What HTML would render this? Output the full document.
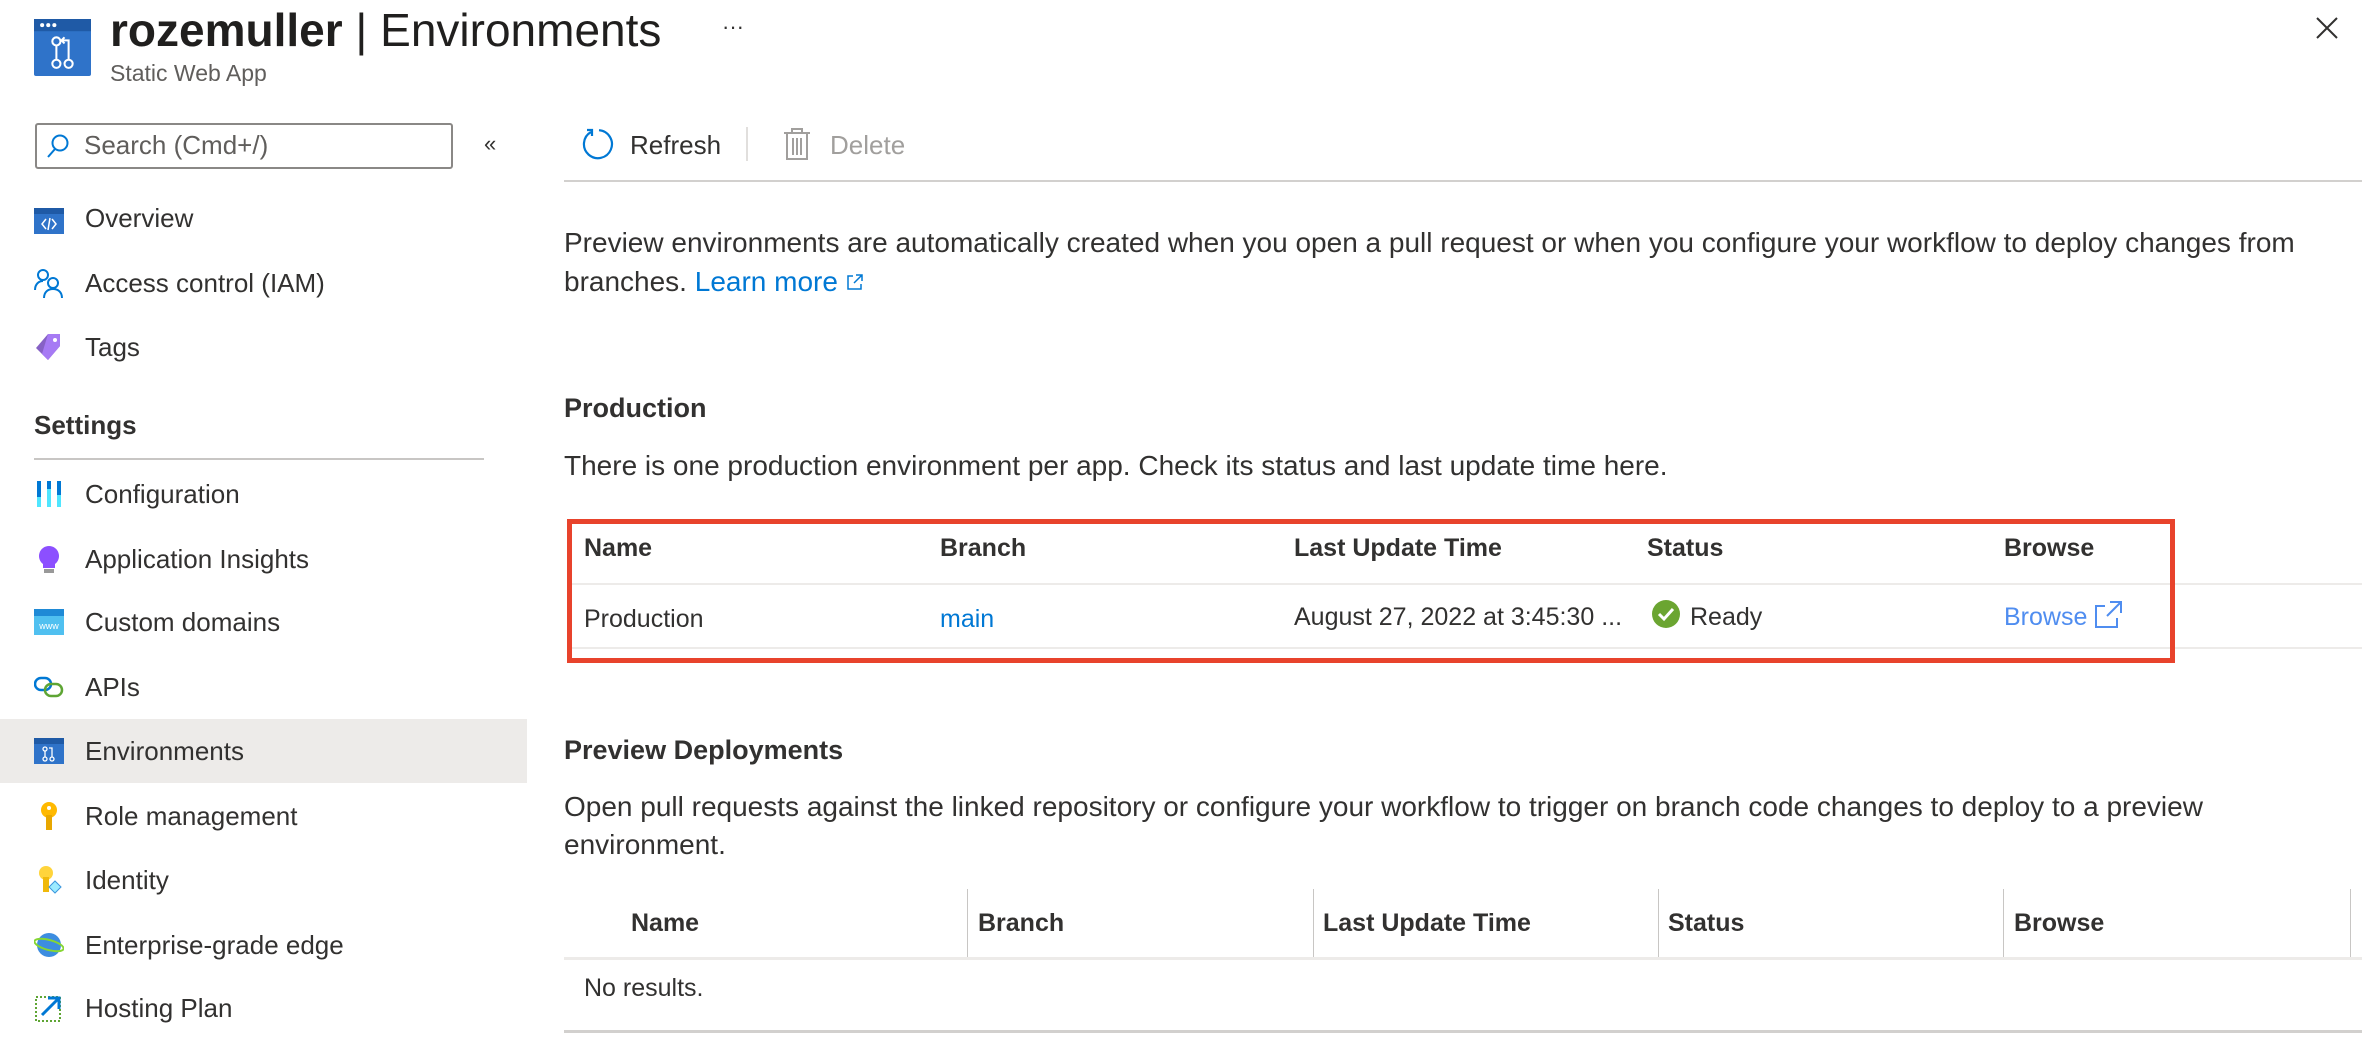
<!DOCTYPE html>
<html><head><meta charset="utf-8"><style>
*{margin:0;padding:0;box-sizing:border-box}
body{width:2362px;height:1042px;background:#fff;font-family:"Liberation Sans",sans-serif;color:#323130;position:relative;overflow:hidden}
.a{position:absolute;white-space:nowrap}
.nav{position:absolute;left:85px;font-size:26px;color:#323130;line-height:30px}
.ic{position:absolute;left:34px;width:30px;height:30px}
.t{font-size:25px;line-height:30px}
.p{font-size:28px;line-height:38px}
.h{font-size:27px;line-height:30px;font-weight:bold}
.b{font-weight:bold}
.hr{position:absolute;height:2px;background:#edebe9}
.sep{position:absolute;width:1px;background:#c8c6c4;top:889px;height:68px}
</style></head><body>
<svg class="a" style="left:34px;top:19px" width="57" height="57" viewBox="0 0 56 56"><rect width="56" height="56" rx="2" fill="#2f73c9"/><rect width="56" height="12" fill="#1f5aa6"/><circle cx="8" cy="6" r="2" fill="#fff"/><circle cx="14" cy="6" r="2" fill="#fff"/><circle cx="20" cy="6" r="2" fill="#fff"/><g fill="none" stroke="#fff" stroke-width="2"><circle cx="22" cy="22" r="4"/><circle cx="22" cy="44" r="4"/><circle cx="34" cy="44" r="4"/><path d="M22 26v14M34 40V21h-6M30 18l-3 3 3 3"/></g></svg>
<div class="a" style="left:110px;top:4px;font-size:46px;line-height:52px;color:#201f1e"><span class="b">rozemuller</span> | Environments</div>
<div class="a" style="left:110px;top:60px;font-size:23px;color:#605e5c">Static Web App</div>
<div class="a" style="left:722px;top:14px;font-size:22px;color:#323130">···</div>
<svg class="a" style="left:2315px;top:16px" width="24" height="24" viewBox="0 0 24 24"><path d="M2 2L22 22M22 2L2 22" stroke="#323130" stroke-width="2"/></svg>
<div class="a" style="left:35px;top:123px;width:418px;height:46px;border:2px solid #8a8886;border-radius:3px"></div>
<svg class="a" style="left:46px;top:133px" width="24" height="26" viewBox="0 0 24 26"><circle cx="14" cy="10" r="7.5" fill="none" stroke="#0078d4" stroke-width="2"/><path d="M9 16L2 24" stroke="#0078d4" stroke-width="2"/></svg>
<div class="a" style="left:84px;top:130px;font-size:26px;line-height:30px;color:#605e5c">Search (Cmd+/)</div>
<div class="a" style="left:484px;top:131px;font-size:22px;color:#323130">«</div>
<svg class="a" style="left:580px;top:127px" width="34" height="34" viewBox="0 0 34 34"><path d="M11 5A14 14 0 1 0 19 3.2" fill="none" stroke="#0078d4" stroke-width="2.2"/><path d="M7 3h5v6" fill="none" stroke="#0078d4" stroke-width="2.2"/></svg>
<div class="a" style="left:630px;top:130px;font-size:26px;line-height:30px">Refresh</div>
<div class="a" style="left:746px;top:127px;width:2px;height:34px;background:#e1dfdd"></div>
<svg class="a" style="left:783px;top:127px" width="28" height="34" viewBox="0 0 28 34"><g fill="none" stroke="#a19f9d" stroke-width="2"><path d="M1 6h26M9 6V2h10v4M4 6v26h20V6M10 11v17M14 11v17M18 11v17"/></g></svg>
<div class="a" style="left:830px;top:130px;font-size:26px;line-height:30px;color:#a19f9d">Delete</div>
<div class="hr" style="left:564px;top:180px;width:1798px;background:#d2d0ce"></div>
<svg class="ic" style="top:206px" viewBox="0 0 30 30"><rect y="2" width="30" height="26" fill="#2f73c9"/><rect y="2" width="30" height="6" fill="#1f5aa6"/><path d="M12 13l-4 5 4 5M18 13l4 5-4 5M16 12l-2 12" fill="none" stroke="#fff" stroke-width="1.5"/></svg>
<div class="nav" style="top:203px">Overview</div>
<svg class="ic" style="top:268px" viewBox="0 0 30 30"><g fill="none" stroke="#0078d4" stroke-width="2"><circle cx="9" cy="7" r="5"/><path d="M1 22c0-6 4-9 8-9"/><circle cx="19" cy="15" r="5"/><path d="M10 30c0-6 4-9 9-9s9 3 9 9"/></g></svg>
<div class="nav" style="top:268px">Access control (IAM)</div>
<svg class="ic" style="top:332px" viewBox="0 0 30 30"><path d="M14 2h12v12L14 28 2 16z" fill="#8661c5"/><path d="M14 2h12v12L14 28 8 22z" fill="#a67af4"/><circle cx="21" cy="8" r="2" fill="#fff"/></svg>
<div class="nav" style="top:332px">Tags</div>
<div class="a b" style="left:34px;top:410px;font-size:26px;color:#323130">Settings</div>
<div class="hr" style="left:34px;top:458px;width:450px;background:#c8c6c4"></div>
<svg class="ic" style="top:479px" viewBox="0 0 30 30"><rect x="3" y="2" width="4" height="26" fill="#50e6ff"/><rect x="3" y="2" width="4" height="16" fill="#0078d4"/><rect x="13" y="2" width="4" height="26" fill="#50e6ff"/><rect x="13" y="2" width="4" height="8" fill="#0078d4"/><rect x="23" y="2" width="4" height="26" fill="#50e6ff"/><rect x="23" y="2" width="4" height="14" fill="#0078d4"/></svg>
<div class="nav" style="top:479px">Configuration</div>
<svg class="ic" style="top:544px" viewBox="0 0 30 30"><path d="M15 2a10 10 0 0 0-6 18v4h12v-4A10 10 0 0 0 15 2z" fill="#8c4fff"/><rect x="10" y="25" width="10" height="4" fill="#999"/></svg>
<div class="nav" style="top:544px">Application Insights</div>
<svg class="ic" style="top:607px" viewBox="0 0 30 30"><rect y="2" width="30" height="26" fill="#50c0f0"/><rect y="2" width="30" height="7" fill="#1f8ad6"/><text x="15" y="22" font-size="9" fill="#fff" text-anchor="middle" font-family="Liberation Sans">www</text></svg>
<div class="nav" style="top:607px">Custom domains</div>
<svg class="ic" style="top:672px" viewBox="0 0 30 30"><rect x="1" y="6" width="16" height="12" rx="6" fill="none" stroke="#0078d4" stroke-width="2.5"/><rect x="11" y="12" width="17" height="12" rx="6" fill="none" stroke="#5ea534" stroke-width="2.5"/></svg>
<div class="nav" style="top:672px">APIs</div>
<div class="a" style="left:0;top:719px;width:527px;height:64px;background:#edebe9"></div>
<svg class="ic" style="top:736px" viewBox="0 0 30 30"><rect y="2" width="30" height="26" fill="#2f73c9"/><rect y="2" width="30" height="6" fill="#1f5aa6"/><g fill="none" stroke="#fff" stroke-width="1.3"><circle cx="11" cy="13" r="2"/><circle cx="11" cy="23" r="2"/><circle cx="18" cy="23" r="2"/><path d="M11 15v6M18 21v-9h-3"/></g></svg>
<div class="nav" style="top:736px">Environments</div>
<svg class="ic" style="top:801px" viewBox="0 0 30 30"><circle cx="15" cy="9" r="8" fill="#ffb900"/><rect x="12" y="14" width="6" height="15" fill="#e8a700"/><circle cx="15" cy="7" r="2" fill="#fff"/></svg>
<div class="nav" style="top:801px">Role management</div>
<svg class="ic" style="top:865px" viewBox="0 0 30 30"><circle cx="12" cy="8" r="7" fill="#ffd43b"/><rect x="9" y="12" width="6" height="15" fill="#f0b90b"/><path d="M21 16l6 6-6 6-6-6z" fill="#9cebff" stroke="#3a96dd"/></svg>
<div class="nav" style="top:865px">Identity</div>
<svg class="ic" style="top:930px" viewBox="0 0 30 30"><circle cx="15" cy="15" r="12" fill="#3d8de0"/><ellipse cx="15" cy="15" rx="15" ry="5" fill="none" stroke="#86d633" stroke-width="2" transform="rotate(15 15 15)"/></svg>
<div class="nav" style="top:930px">Enterprise-grade edge</div>
<svg class="ic" style="top:993px" viewBox="0 0 30 30"><rect x="2" y="4" width="24" height="24" fill="none" stroke="#5ea534" stroke-width="2" stroke-dasharray="2 2"/><path d="M8 22L24 6M14 5h11v11" fill="none" stroke="#0078d4" stroke-width="3"/></svg>
<div class="nav" style="top:993px">Hosting Plan</div>
<div class="a p" style="left:564px;top:223px;line-height:39px">Preview environments are automatically created when you open a pull request or when you configure your workflow to deploy changes from<br>branches. <span style="color:#0078d4">Learn more</span> <svg width="18" height="18" viewBox="0 0 18 18"><path d="M7 3H2v13h13v-5M10 2h6v6M16 2L8 10" fill="none" stroke="#0078d4" stroke-width="1.5"/></svg></div>
<div class="a h" style="left:564px;top:393px">Production</div>
<div class="a p" style="left:564px;top:447px">There is one production environment per app. Check its status and last update time here.</div>
<div class="hr" style="left:570px;top:583px;width:1792px"></div>
<div class="hr" style="left:570px;top:647px;width:1792px"></div>
<div class="a" style="left:567px;top:519px;width:1608px;height:144px;border:5px solid #e8432c"></div>
<div class="a t b" style="left:584px;top:533px">Name</div>
<div class="a t b" style="left:940px;top:533px">Branch</div>
<div class="a t b" style="left:1294px;top:533px">Last Update Time</div>
<div class="a t b" style="left:1647px;top:533px">Status</div>
<div class="a t b" style="left:2004px;top:533px">Browse</div>
<div class="a t" style="left:584px;top:604px">Production</div>
<div class="a t" style="left:940px;top:604px;color:#0078d4">main</div>
<div class="a t" style="left:1294px;top:602px">August 27, 2022 at 3:45:30 ...</div>
<svg class="a" style="left:1652px;top:600px" width="28" height="28" viewBox="0 0 28 28"><circle cx="14" cy="14" r="14" fill="#6ba531"/><path d="M7 14l5 5 9-10" fill="none" stroke="#fff" stroke-width="3"/></svg>
<div class="a t" style="left:1690px;top:602px">Ready</div>
<div class="a t" style="left:2004px;top:602px;color:#4f8df0">Browse</div>
<svg class="a" style="left:2093px;top:600px" width="30" height="30" viewBox="0 0 30 30"><path d="M12 6H3v21h21v-9M17 2h11v11M28 2L14 16" fill="none" stroke="#4f8df0" stroke-width="2"/></svg>
<div class="a h" style="left:564px;top:735px">Preview Deployments</div>
<div class="a p" style="left:564px;top:788px">Open pull requests against the linked repository or configure your workflow to trigger on branch code changes to deploy to a preview<br>environment.</div>
<div class="sep" style="left:967px"></div><div class="sep" style="left:1313px"></div><div class="sep" style="left:1658px"></div><div class="sep" style="left:2003px"></div><div class="sep" style="left:2350px"></div>
<div class="a t b" style="left:631px;top:908px">Name</div>
<div class="a t b" style="left:978px;top:908px">Branch</div>
<div class="a t b" style="left:1323px;top:908px">Last Update Time</div>
<div class="a t b" style="left:1668px;top:908px">Status</div>
<div class="a t b" style="left:2014px;top:908px">Browse</div>
<div class="hr" style="left:564px;top:957px;width:1798px;height:3px"></div>
<div class="a t" style="left:584px;top:973px">No results.</div>
<div class="hr" style="left:564px;top:1030px;width:1798px;height:3px;background:#d2d0ce"></div>
</body></html>
